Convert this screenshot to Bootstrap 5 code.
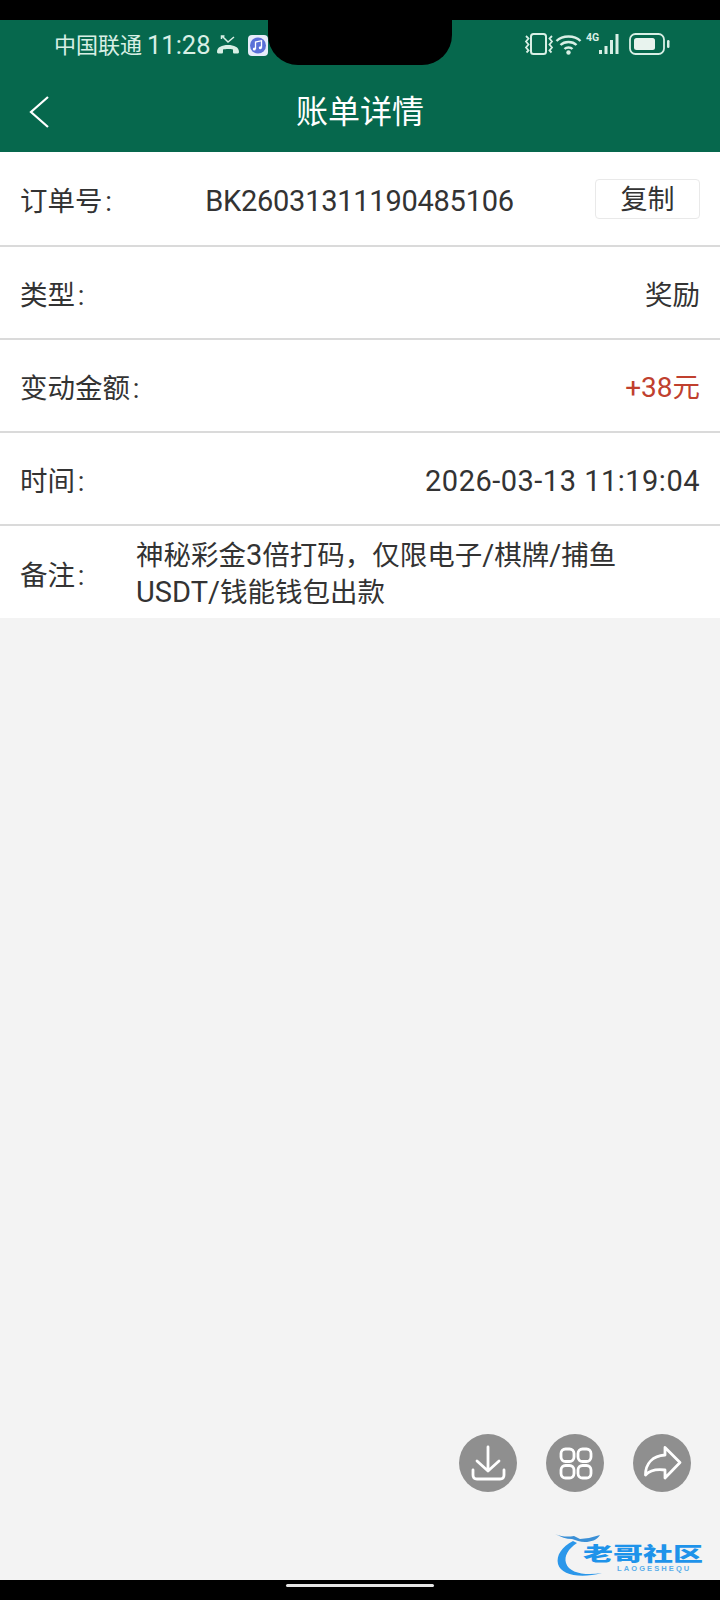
<!DOCTYPE html>
<html lang="zh-CN">
<head>
    <meta charset="UTF-8">
    <title>账单详情</title>
    <link href="https://cdn.jsdelivr.net/npm/bootstrap@5.3.0/dist/css/bootstrap.min.css" rel="stylesheet">
    <style>
        html, body { margin: 0; padding: 0; }
        body {
            background: #f3f3f3;
            font-family: Roboto, "Noto Sans CJK SC", sans-serif;
            color: #333;
        }
        .phone { width: 720px; height: 1600px; overflow: hidden; }
        .top-strip { height: 20px; background: #000; }
        .bottom-strip { height: 20px; background: #000; }
        .home-bar { width: 148px; height: 3px; margin-top: 4px; background: #e6e6e6; border-radius: 2px; }
        .notch { left: 268px; top: 0; width: 184px; height: 65px; background: #000; border-radius: 0 0 30px 30px; }

        .app-head { height: 132px; background: #06684d; color: #fff; }
        .status-line { height: 48px; padding-left: 54px; padding-top: 2px; color: #d8efe5; }
        .carrier { font-size: 22px; width: 93px; }
        .clock { font-size: 25.500px; width: 69px; }
        .status-right { left: 523px; top: 33px; color: #d8efe5; }
        .net-tag { font-size: 10.500px; font-weight: 700; line-height: 10px; align-self: flex-start; }
        .head-side { width: 100px; padding-left: 28px; }
        .head-title { font-size: 32px; font-weight: 400; margin: 0; line-height: 40px; }
        .nav-line { height: 84px; padding-top: 3px; }

        .bill-list { --bs-list-group-border-color: #dadada; --bs-list-group-border-width: 2px; }
        .bill-row {
            height: 93.300px;
            padding: 6px 20px 0 20px;
            font-size: 27.500px;
            color: #333;
        }
        .bill-row.first-row { height: 94.500px; }
        .bill-row.last-row { height: 92px; }
        .order-val { font-size: 29px; letter-spacing: -.25px; padding-left: 12px; }
        .time-val { font-size: 29px; letter-spacing: .5px; }
        .money-num { font-size: 28px; }
        .copy-btn {
            --bs-btn-border-color: #e9e9e9;
            --bs-btn-color: #333;
            width: 105px; height: 40px; padding: 2px 0 0;
            margin-top: -4px;
            font-size: 27px; line-height: 36px;
            border-radius: 4px;
        }
        .money-val { color: #c0402e; }
        .note-label { width: 116px; flex-shrink: 0; }
        .note-text { line-height: 36px; font-size: 27.500px; margin-top: -2px; }
        .note-text b { font-weight: 400; font-size: 29px; }

        .fab-group { right: 29px; top: 1434px; gap: 29px; }
        .fab-round { width: 58px; height: 58px; border-radius: 50%; background: #8f8f8f; }
        .fab-round svg { display: block; }

        .logo-wrap { left: 555px; top: 1532px; width: 150px; height: 48px; }
        .logo-name {
            left: 28px; top: 13px;
            font: 900 24px/20px "Noto Sans CJK SC", sans-serif;
            color: #1e93ea;
            white-space: nowrap;
            transform: scale(1.25, .8);
            transform-origin: left top;
        }
        .logo-sub { left: 62px; top: 33px; font: 700 7.500px/8px "Liberation Sans", sans-serif; color: #5aaeea; letter-spacing: 2.100px; }
    </style>
</head>
<body>

<div class="phone position-relative d-flex flex-column">
    <div class="top-strip"></div>

    <header class="app-head">
        <div class="status-line d-flex align-items-center">
            <span class="carrier">中国联通</span>
            <span class="clock">11:28</span>
            <!-- 未接来电 -->
            <svg width="24" height="22" viewBox="0 0 24 22" class="me-2">
                <path d="M1 18c0-5 5-7 11-7s11 2 11 7c0 1-1 1.500-2 1.500h-2.500c-1 0-1.500-.5-1.500-1.500v-2.500c-2.500-.8-7.500-.8-10 0V18c0 1-.5 1.500-1.500 1.500H3c-1 0-2-.5-2-1.500z" fill="#d8efe5"/>
                <path d="M6 2l6 6 6-5M5.500 5V2h3" fill="none" stroke="#d8efe5" stroke-width="1.500"/>
            </svg>
            <svg width="20" height="21" viewBox="0 0 20 21">
                <rect width="20" height="21" rx="4" fill="#e6ecfa"/>
                <circle cx="10" cy="10.500" r="8" fill="#5a70d8"/>
                <path d="M7.500 14V7l6-1.300v7" fill="none" stroke="#fff" stroke-width="1.300"/>
                <circle cx="6.300" cy="14" r="1.500" fill="#fff"/>
                <circle cx="12.300" cy="12.800" r="1.500" fill="#fff"/>
            </svg>
        </div>
        <div class="nav-line d-flex align-items-center">
            <div class="head-side">
                <svg width="22" height="34" viewBox="0 0 22 34" class="d-block">
                    <path d="M20 2L3 17l17 15" fill="none" stroke="#fff" stroke-width="2.200"/>
                </svg>
            </div>
            <h1 class="head-title flex-grow-1 text-center">账单详情</h1>
            <div class="head-side"></div>
        </div>
    </header>

    <ul class="list-group list-group-flush rounded-0 bill-list">
        <li class="list-group-item bill-row first-row d-flex align-items-center">
            <span>订单号&#8202;:</span>
            <span class="order-val mx-auto">BK26031311190485106</span>
            <button class="btn copy-btn" type="button">复制</button>
        </li>
        <li class="list-group-item bill-row d-flex align-items-center justify-content-between">
            <span>类型&#8202;:</span>
            <span>奖励</span>
        </li>
        <li class="list-group-item bill-row d-flex align-items-center justify-content-between">
            <span>变动金额&#8202;:</span>
            <span class="money-val"><span class="money-num">+38</span>元</span>
        </li>
        <li class="list-group-item bill-row d-flex align-items-center justify-content-between">
            <span>时间&#8202;:</span>
            <span class="time-val">2026-03-13 11:19:04</span>
        </li>
        <li class="list-group-item bill-row last-row d-flex align-items-center">
            <span class="note-label">备注&#8202;:</span>
            <div class="note-text">神秘彩金<b>3</b>倍打码&#65292;仅限电子<b>/</b>棋牌<b>/</b>捕鱼<br><b>USDT/</b>钱能钱包出款</div>
        </li>
    </ul>

    <div class="flex-grow-1"></div>

    <div class="bottom-strip d-flex justify-content-center">
        <div class="home-bar"></div>
    </div>

    <!-- 刘海和状态栏右侧图标 -->
    <div class="notch position-absolute"></div>
    <div class="status-right position-absolute d-flex align-items-center">
        <svg width="32" height="22" viewBox="0 0 32 22" fill="none" stroke="#d8efe5">
            <rect x="8" y="1" width="15" height="20" rx="2.500" stroke-width="2"/>
            <path d="M3 3l2.500 2.500L3 8.500l2.500 3L3 14.500l2.500 3-2 2M29 3l-2.500 2.500 2.500 3-2.500 3 2.500 3-2.500 3 2 2" stroke-width="1.800"/>
        </svg>
        <svg width="27" height="22" viewBox="0 0 27 22" fill="none" stroke="#d8efe5" stroke-width="2.400">
            <path d="M1.500 8c6-6 18-6 24 0M5.500 12c4-4 12-4 16 0M9.500 16c2-2 6-2 8 0"/>
            <circle cx="13.500" cy="19.500" r="2.200" fill="#d8efe5" stroke="none"/>
        </svg>
        <span class="net-tag ms-1">4G</span>
        <svg width="22" height="22" viewBox="0 0 22 22" fill="#d8efe5" class="ms-0">
            <rect x="0" y="17" width="3" height="4"/>
            <rect x="5.500" y="13" width="3" height="8"/>
            <rect x="11" y="7" width="3" height="14"/>
            <rect x="16.500" y="1" width="3" height="20"/>
        </svg>
        <svg width="42" height="22" viewBox="0 0 42 22" class="ms-2">
            <rect x="1" y="1" width="34" height="20" rx="5.500" fill="none" stroke="#d8efe5" stroke-width="1.800"/>
            <rect x="5" y="5" width="21" height="12" rx="2.500" fill="#e8f3ee"/>
            <rect x="38" y="7" width="2.500" height="8" rx="1.200" fill="#d8efe5"/>
        </svg>
    </div>

    <!-- 悬浮按钮 -->
    <div class="fab-group position-absolute d-flex">
        <div class="fab-round">
            <svg width="58" height="58" viewBox="0 0 58 58" fill="none" stroke="#fff" stroke-width="2.800" stroke-linecap="round" stroke-linejoin="round">
                <path d="M29 13v24M18 27l11 10 11-10"/>
                <path d="M14 36v5c0 2.500 1.500 4 4 4h23c2.500 0 4-1.500 4-4v-5"/>
            </svg>
        </div>
        <div class="fab-round">
            <svg width="58" height="58" viewBox="0 0 58 58" fill="none" stroke="#fff" stroke-width="2.800">
                <rect x="15" y="15" width="13" height="12.500" rx="4.500"/>
                <rect x="32" y="15" width="13" height="12.500" rx="4.500"/>
                <rect x="15" y="31.500" width="13" height="12.500" rx="4.500"/>
                <rect x="32" y="31.500" width="13" height="12.500" rx="4.500"/>
            </svg>
        </div>
        <div class="fab-round">
            <svg width="58" height="58" viewBox="0 0 58 58" fill="none" stroke="#fff" stroke-width="2.800" stroke-linejoin="round">
                <path d="M32 13.500L47 28.500 32 44v-8c-8-1-15 0-19.500 5 0-12 7.500-19 19.500-20z"/>
            </svg>
        </div>
    </div>

    <!-- 水印 -->
    <div class="logo-wrap position-absolute">
        <svg width="70" height="48" viewBox="0 0 70 48" class="position-absolute top-0 start-0">
            <path d="M18 9C7 15 1 23 3 32c3 11 22 15 44 9-17 3-33 0-36-10-2-7 2-14 11-20z" fill="#2b97ea"/>
            <path d="M0 2c7 3 13 3 19 2l6 3 9-1 11-3c-3 5-9 7-15 7-5 0-9-2-13-3-6 0-11-2-17-5z" fill="#3a8fd6"/>
        </svg>
        <span class="logo-name position-absolute">老哥社区</span>
        <span class="logo-sub position-absolute">LAOGESHEQU</span>
    </div>
</div>

<script src="https://cdn.jsdelivr.net/npm/bootstrap@5.3.0/dist/js/bootstrap.bundle.min.js"></script>
</body>
</html>
